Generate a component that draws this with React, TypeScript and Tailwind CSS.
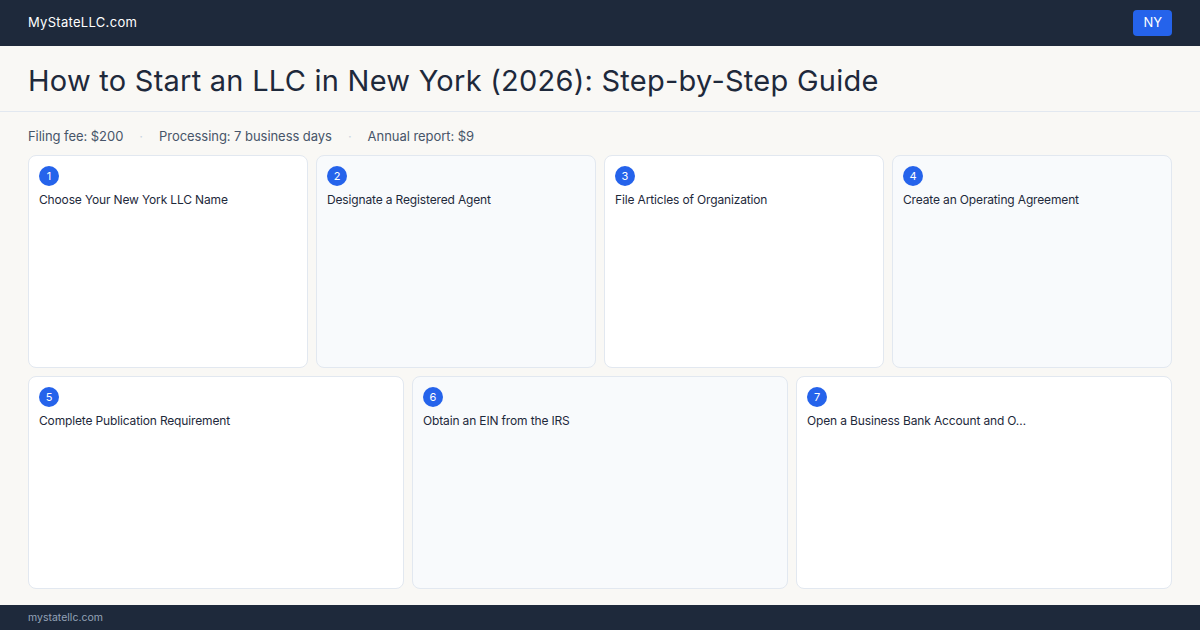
const steps = [
  "Choose Your New York LLC Name",
  "Designate a Registered Agent",
  "File Articles of Organization",
  "Create an Operating Agreement",
  "Complete Publication Requirement",
  "Obtain an EIN from the IRS",
  "Open a Business Bank Account and O…",
];

function StepCard({ n, title }: { n: number; title: string }) {
  return (
    <div
      className={
        "rounded-lg border border-[#e2e8f0] p-[10px] flex flex-col gap-[6px] " +
        (n % 2 === 0 ? "bg-[#f8fafc]" : "bg-white")
      }
    >
      <div className="w-5 h-5 rounded-full bg-[#2563eb] text-white text-[11px] flex items-center justify-center">
        {n}
      </div>
      <p className="text-[12px] leading-4 text-[#1e293b] tracking-[-0.15px] truncate">{title}</p>
    </div>
  );
}

export default function App() {
  return (
    <div
      className="w-[1200px] h-[630px] flex flex-col bg-[#f9f8f5] overflow-hidden"
      style={{ fontFamily: "Inter, 'Noto Sans', sans-serif" }}
    >
      {/* Header */}
      <div className="h-[46px] shrink-0 bg-[#1e293b] flex items-center justify-between px-7">
        <span className="text-[13px] text-white tracking-[0.3px]">MyStateLLC.com</span>
        <span className="bg-[#2563eb] text-white text-[13px] rounded px-[10px] py-[3px]">NY</span>
      </div>

      {/* Title */}
      <div className="shrink-0 px-7 pt-[17px] pb-[12px] border-b border-[#e2e8f0]">
        <h1 className="text-[29px] leading-9 text-[#1e293b] tracking-[0.25px]">
          How to Start an LLC in New York (2026): Step-by-Step Guide
        </h1>
      </div>

      {/* Stats */}
      <div className="shrink-0 px-7 pt-[14px] pb-[9px] flex items-center text-[13px] leading-5 text-[#475569] tracking-[-0.05px]">
        <span>Filing fee: $200</span>
        <span className="mx-[16px] text-[#cbd5e1]">·</span>
        <span>Processing: 7 business days</span>
        <span className="mx-[16px] text-[#cbd5e1]">·</span>
        <span>Annual report: $9</span>
      </div>

      {/* Steps */}
      <div className="flex-1 min-h-0 px-7 pb-4 grid grid-rows-2 gap-2">
        <div className="grid grid-cols-4 gap-2">
          {steps.slice(0, 4).map((s, i) => (
            <StepCard key={i} n={i + 1} title={s} />
          ))}
        </div>
        <div className="grid grid-cols-3 gap-2">
          {steps.slice(4).map((s, i) => (
            <StepCard key={i} n={i + 5} title={s} />
          ))}
        </div>
      </div>

      {/* Footer */}
      <div className="h-[25px] shrink-0 bg-[#1e293b] flex items-center px-7">
        <span className="text-[10.5px] text-[#94a3b8]">mystatellc.com</span>
      </div>
    </div>
  );
}
